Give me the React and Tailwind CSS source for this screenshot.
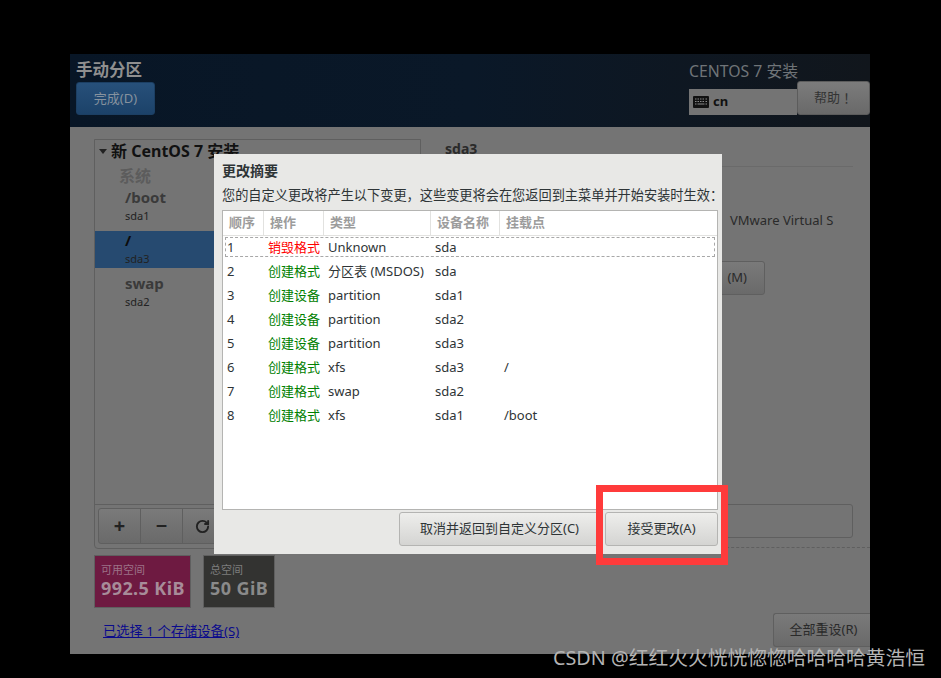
import { RotateCw } from 'lucide-react'

const font = { fontFamily: '"Noto Sans", "Noto Sans CJK SC", sans-serif' }

const rows = [
  ['1', '销毁格式', 'Unknown', 'sda', ''],
  ['2', '创建格式', '分区表 (MSDOS)', 'sda', ''],
  ['3', '创建设备', 'partition', 'sda1', ''],
  ['4', '创建设备', 'partition', 'sda2', ''],
  ['5', '创建设备', 'partition', 'sda3', ''],
  ['6', '创建格式', 'xfs', 'sda3', '/'],
  ['7', '创建格式', 'swap', 'sda2', ''],
  ['8', '创建格式', 'xfs', 'sda1', '/boot'],
]

const KeyboardIcon = () => (
  <svg width="16" height="12" viewBox="0 0 16 12" className="shrink-0">
    <rect x="0" y="0" width="16" height="12" rx="1" fill="#111" />
    <path d="M2 3h1.5M4.5 3H6M7 3h1.5M9.5 3H11M12.5 3H14M2 5.5h1.5M4.5 5.5H6M7 5.5h1.5M9.5 5.5H11M12.5 5.5H14M2 8h1.5M4.5 8h7M12.5 8H14" stroke="#8a8a8a" strokeWidth="1.2" />
  </svg>
)

const PartitionRow = ({ name, dev, selected }) => (
  <div className={`h-[37px] pl-[30px] flex flex-col justify-center ${selected ? 'bg-[#264a70]' : ''}`}>
    <div className={`text-[15px] leading-[18px] font-bold ${selected ? 'text-[#0c0c0c]' : 'text-[#3a3a3a]'}`}>{name}</div>
    <div className="text-[11px] leading-[19px] text-[#222]">{dev}</div>
  </div>
)

const App = () => {
  return (
    <div className="relative w-[941px] h-[678px] bg-black pt-[54px] pl-[70px] overflow-hidden" style={font}>
      <div className="w-[800px] h-[600px] flex flex-col bg-[#747474]">
        {/* header */}
        <div className="h-[73px] shrink-0 flex justify-between bg-gradient-to-r from-[#081626] via-[#0a1828] to-[#11161c]">
          <div className="pl-[6px] pt-[5px]">
            <div className="text-[16.5px] leading-[22px] font-bold text-[#8f8f8f]">手动分区</div>
            <div className="mt-[1px] w-[79px] h-[33px] rounded-[3px] border border-[#1c3f63] bg-gradient-to-b from-[#27507a] to-[#1c4269] flex items-center justify-center text-[13px] text-[#86929e]">
              完成(D)
            </div>
          </div>
          <div className="w-[181px] pt-[7px]">
            <div className="text-[15.8px] leading-[20px] text-[#6f7478]">CENTOS 7 安装</div>
            <div className="flex items-start">
              <div className="mt-[8px] w-[108px] h-[26px] bg-[#747474] flex items-center gap-[4px] pl-[4px] text-[13px] font-bold text-[#111]">
                <KeyboardIcon />
                cn
              </div>
              <div className="w-[73px] h-[34px] rounded-[3px] border border-[#5c5c5c] bg-gradient-to-b from-[#7c7c7c] to-[#696969] flex items-center justify-center text-[13px] text-[#333]">
                帮助<span className="font-['Noto_Sans_CJK_TC']">！</span>
              </div>
            </div>
          </div>
        </div>

        {/* body */}
        <div className="flex-1 flex relative">
          <div className="w-[351px] pl-[24px] pt-[12px] shrink-0">
            <div className="w-[327px] h-[410px] border border-[#5f5f5f] rounded-b-[4px] flex flex-col">
              <div className="h-[22px] flex items-center pl-[4px] gap-[4px] text-[16px] font-bold text-[#111]">
                <div className="w-0 h-0 border-x-[4px] border-x-transparent border-t-[5px] border-t-[#222]" />
                新 CentOS 7 安装
              </div>
              <div className="pl-[24px] mt-[4px] h-[20px] text-[16px] leading-[20px] font-bold text-[#5c5c5c]">系统</div>
              <div className="mt-[2px] flex flex-col gap-[6px]">
                <PartitionRow name="/boot" dev="sda1" />
                <PartitionRow name="/" dev="sda3" selected />
                <PartitionRow name="swap" dev="sda2" />
              </div>
              <div className="flex-1" />
              <div className="h-[44px] border-t border-[#5f5f5f] px-[3px] pt-[3px]">
                <div className="w-[300px] h-[36px] flex rounded-[3px] border border-[#5f5f5f] bg-gradient-to-b from-[#7a7a7a] to-[#6a6a6a] text-[#222]">
                  <div className="w-[42px] border-r border-[#5f5f5f] flex items-center justify-center text-[20px] font-bold">+</div>
                  <div className="w-[42px] border-r border-[#5f5f5f] flex items-center justify-center text-[20px] font-bold">−</div>
                  <div className="w-[38px] flex items-center justify-center">
                    <RotateCw size={15} strokeWidth={3} />
                  </div>
                </div>
              </div>
            </div>
            <div className="mt-[6px] flex gap-[12px]">
              <div className="w-[97px] h-[53px] bg-[#6e1a41] border border-[#5f5f5f] pl-[6px] pt-[6px]">
                <div className="text-[11px] leading-[15px] text-[#9c7288]">可用空间</div>
                <div className="text-[18px] leading-[22px] font-bold tracking-[0.4px] whitespace-nowrap text-[#a78c99]">992.5 KiB</div>
              </div>
              <div className="w-[72px] h-[53px] bg-[#333331] border border-[#5f5f5f] pl-[6px] pt-[6px]">
                <div className="text-[11px] leading-[15px] text-[#7d7d7d]">总空间</div>
                <div className="text-[18px] leading-[22px] font-bold tracking-[0.4px] whitespace-nowrap text-[#8a8a8a]">50 GiB</div>
              </div>
            </div>
            <div className="mt-[14px] pl-[9px] text-[13.3px] leading-[18px] text-[#0a0a8c] underline">已选择 1 个存储设备(S)</div>
          </div>

          <div className="flex-1 flex flex-col">
            <div className="pl-[24px] pr-[17px] pt-[13px]">
              <div className="h-[27px] border-b border-[#6a6a6a] text-[14px] leading-[18px] font-bold text-[#2a2a2a]">sda3</div>
            </div>
            <div className="pl-[309px] mt-[44px] text-[13px] leading-[18px] whitespace-nowrap text-[#2a2a2a]">VMware Virtual S</div>
            <div className="ml-[230px] mt-[32px] w-[114px] h-[34px] rounded-[3px] border border-[#5f5f5f] bg-gradient-to-b from-[#7a7a7a] to-[#6a6a6a] flex items-center justify-end pr-[17px] text-[13px] text-[#2a2a2a]">
              (M)
            </div>
            <div className="ml-[230px] mt-[209px] w-[202px] h-[34px] rounded-[3px] border border-[#5f5f5f]" />
            <div className="mt-[9px] ml-[280px] border-t border-dashed border-[#5f5f5f]" />
            <div className="flex justify-end mt-[65px]">
              <div className="w-[97px] h-[34px] pl-[3px] rounded-l-[3px] border border-r-0 border-[#5f5f5f] bg-gradient-to-b from-[#7a7a7a] to-[#6a6a6a] flex items-center justify-center text-[13px] text-[#2a2a2a]">
                全部重设(R)
              </div>
            </div>
          </div>
        </div>
      </div>

      {/* summary dialog */}
      <div className="absolute left-[214px] top-[154px] w-[508px] h-[400px] bg-[#e8e8e6] px-[8px] flex flex-col">
        <div className="mt-[8px] text-[14px] leading-[18px] font-bold text-[#2e3436]">更改摘要</div>
        <div className="mt-[6px] text-[13.2px] leading-[18px] whitespace-nowrap text-[#2e3436]">您的自定义更改将产生以下变更，这些变更将会在您返回到主菜单并开始安装时生效：</div>
        <div className="mt-[6px] w-[496px] h-[300px] shrink-0 border border-[#b4b4b2] bg-white">
          <div className="h-[25px] grid grid-cols-[41px_60px_107px_69px_1fr] border-b border-[#e2e2e0] text-[13px] font-bold text-[#9c9c9c]">
            <div className="pl-[6px] flex items-center border-r border-[#e2e2e0]">顺序</div>
            <div className="pl-[6px] flex items-center border-r border-[#e2e2e0]">操作</div>
            <div className="pl-[6px] flex items-center border-r border-[#e2e2e0]">类型</div>
            <div className="pl-[6px] flex items-center border-r border-[#e2e2e0]">设备名称</div>
            <div className="pl-[6px] flex items-center">挂载点</div>
          </div>
          {rows.map((row, index) => (
            <div key={index} className="h-[24px] grid grid-cols-[41px_60px_107px_69px_1fr] items-center text-[13px] text-[#2e3436] relative whitespace-nowrap">
              {index === 0 && <div className="absolute left-[2px] right-[2px] top-[1px] h-[20px] border border-dashed border-[#a8a8a8]" />}
              <div className="pl-[4px]">{row[0]}</div>
              <div className={`pl-[4px] ${index === 0 ? 'text-[#ff0000]' : 'text-[#008000]'}`}>{row[1]}</div>
              <div className="pl-[4px]">{row[2]}</div>
              <div className="pl-[4px]">{row[3]}</div>
              <div className="pl-[4px]">{row[4]}</div>
            </div>
          ))}
        </div>
        <div className="mt-[2px] w-[496px] flex justify-end gap-[5px] text-[13px] text-[#2e3436]">
          <div className="w-[201px] h-[34px] rounded-[3px] border border-[#b4b4b2] bg-gradient-to-b from-[#eeeeec] to-[#d4d4d2] flex items-center justify-center">取消并返回到自定义分区(C)</div>
          <div className="w-[113px] h-[34px] rounded-[3px] border border-[#b4b4b2] bg-gradient-to-b from-[#eeeeec] to-[#d4d4d2] flex items-center justify-center">接受更改(A)</div>
        </div>
      </div>

      {/* red annotation and watermark */}
      <div className="absolute left-[596px] top-[485px] w-[132px] h-[80px] border-[7px] border-[#ff3b3b]" />
      <div className="absolute left-[553px] top-[644px] text-[19.75px] leading-[28px] whitespace-nowrap text-[#b4b4b4]">CSDN @红红火火恍恍惚惚哈哈哈哈黄浩恒</div>
    </div>
  )
}

export default App
